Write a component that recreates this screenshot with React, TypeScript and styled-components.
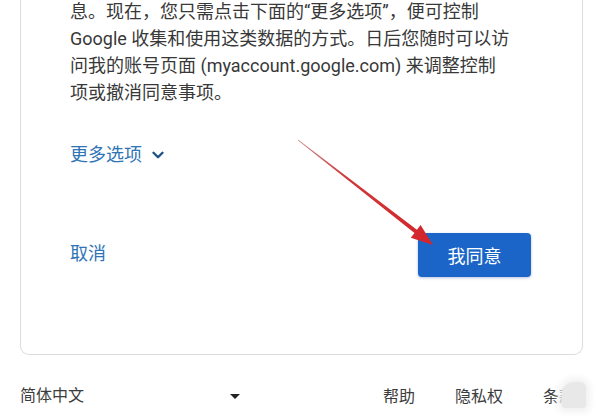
import React from "react";
import styled, { createGlobalStyle } from "styled-components";
import { ChevronDown } from "lucide-react";

const Global = createGlobalStyle`
  html, body { margin: 0; padding: 0; background: #ffffff; }
  body { overflow: hidden; }
`;

const Page = styled.div`
  position: relative;
  width: 603px;
  height: 420px;
  overflow: hidden;
  background: #ffffff;
  font-family: Roboto, "Noto Sans CJK SC", "Noto Sans", sans-serif;
`;

const Card = styled.div`
  margin: 0 20px;
  border: 1px solid #dcdcdc;
  border-top: none;
  border-radius: 0 0 9px 9px;
  padding: 0 51px 77px 49px;
  display: flex;
  flex-direction: column;
`;

const Paragraph = styled.p`
  margin: -2px 0 0 0;
  font-size: 18px;
  line-height: 27px;
  color: #383838;
  white-space: nowrap;
`;

const MoreLink = styled.div`
  margin-top: 36px;
  display: flex;
  align-items: center;
  gap: 7px;
  font-size: 18px;
  line-height: 26px;
  color: #2f74b5;
`;

const Actions = styled.div`
  margin-top: 65px;
  display: flex;
  align-items: center;
  justify-content: space-between;
`;

const TextButton = styled.span`
  font-size: 18px;
  line-height: 26px;
  color: #2f74b5;
  margin-top: -3px;
`;

const PrimaryButton = styled.button`
  width: 113px;
  height: 44px;
  border: none;
  border-radius: 4px;
  background: #1b65c8;
  color: #ffffff;
  font-family: inherit;
  font-size: 18px;
  box-shadow: 0 1px 3px rgba(40, 80, 160, 0.35);
  padding: 0;
`;

const Footer = styled.div`
  margin-top: 28px;
  padding: 0 28px 0 20px;
  display: flex;
  align-items: center;
  font-size: 16px;
  line-height: 24px;
  color: #3c3c3c;
`;

const LangSelect = styled.div`
  width: 220px;
  display: flex;
  align-items: center;
  justify-content: space-between;
`;

const Caret = styled.span`
  width: 0;
  height: 0;
  border-left: 5px solid transparent;
  border-right: 5px solid transparent;
  border-top: 5px solid #222;
  margin-top: 1px;
`;

const Links = styled.div`
  margin-left: auto;
  display: flex;
  align-items: center;
  gap: 40px;
  padding-top: 2px;
`;

const Watermark = styled.div`
  position: absolute;
  left: 562px;
  top: 382px;
  width: 24px;
  height: 26px;
  background: #e8e8e8;
  border-radius: 12px 6px 3px 3px;
  box-shadow: 0 0 6px 4px rgba(240, 240, 240, 0.9);
`;

const ArrowLayer = styled.svg`
  position: absolute;
  left: 0;
  top: 0;
  width: 603px;
  height: 420px;
  pointer-events: none;
`;

export default function App() {
  return (
    <Page>
      <Global />
      <Card>
        <Paragraph>
          息。现在，您只需点击下面的“更多选项”，便可控制
          <br />
          Google 收集和使用这类数据的方式。日后您随时可以访
          <br />
          问我的账号页面 (myaccount.google.com) 来调整控制
          <br />
          项或撤消同意事项。
        </Paragraph>
        <MoreLink>
          更多选项
          <ChevronDown size={18} strokeWidth={3.2} color="#1f5285" />
        </MoreLink>
        <Actions>
          <TextButton>取消</TextButton>
          <PrimaryButton>我同意</PrimaryButton>
        </Actions>
      </Card>
      <Footer>
        <LangSelect>
          <span>简体中文</span>
          <Caret />
        </LangSelect>
        <Links>
          <span>帮助</span>
          <span>隐私权</span>
          <span>条款</span>
        </Links>
      </Footer>
      <Watermark />
      <ArrowLayer viewBox="0 0 603 420">
        <defs>
          <linearGradient id="shaft" x1="298" y1="140" x2="433" y2="245" gradientUnits="userSpaceOnUse">
            <stop offset="0" stopColor="#c98a8a" />
            <stop offset="0.35" stopColor="#d0383a" />
            <stop offset="1" stopColor="#d3242a" />
          </linearGradient>
        </defs>
        <polygon
          points="298.3,139.7 416.9,229.8 420.6,225.1 433,245 410.8,237.7 414.5,233 297.7,140.3"
          fill="url(#shaft)"
        />
      </ArrowLayer>
    </Page>
  );
}
